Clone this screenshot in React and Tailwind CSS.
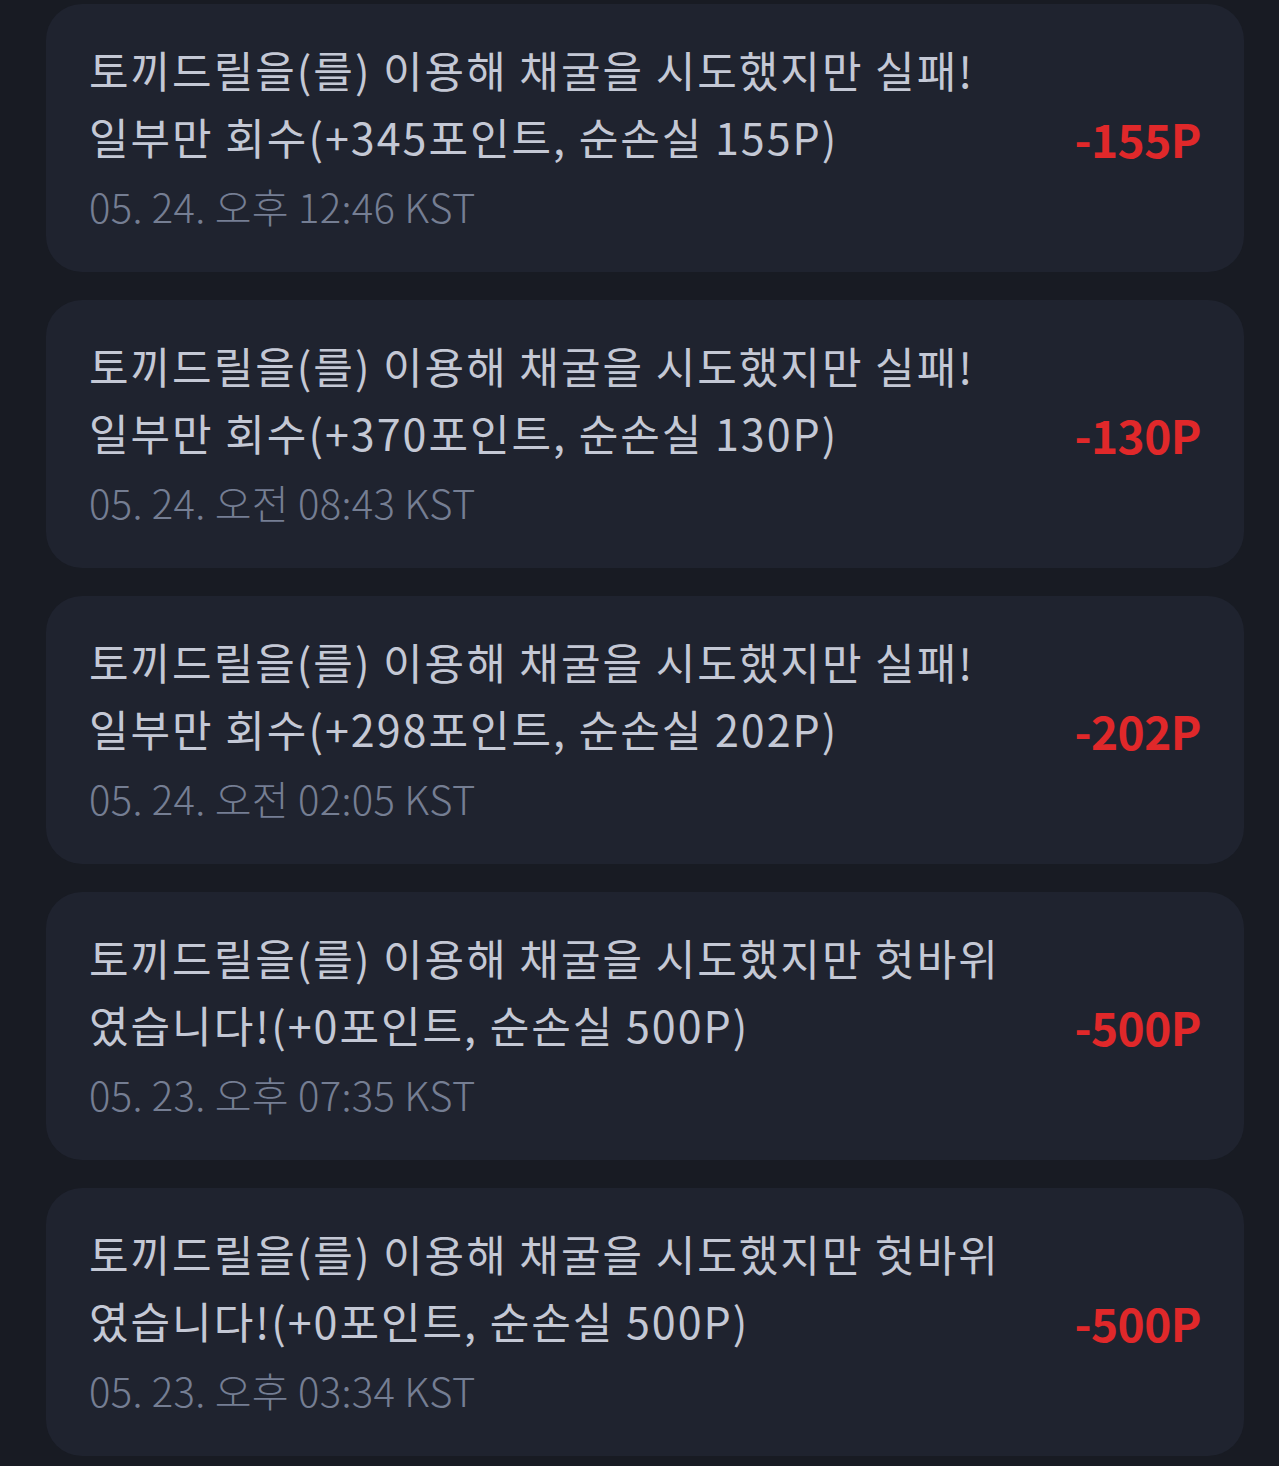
const items = [
  {
    lines: ['토끼드릴을(를) 이용해 채굴을 시도했지만 실패!', '일부만 회수(+345포인트, 순손실 155P)'],
    date: '05. 24. 오후 12:46 KST',
    amount: '-155P',
  },
  {
    lines: ['토끼드릴을(를) 이용해 채굴을 시도했지만 실패!', '일부만 회수(+370포인트, 순손실 130P)'],
    date: '05. 24. 오전 08:43 KST',
    amount: '-130P',
  },
  {
    lines: ['토끼드릴을(를) 이용해 채굴을 시도했지만 실패!', '일부만 회수(+298포인트, 순손실 202P)'],
    date: '05. 24. 오전 02:05 KST',
    amount: '-202P',
  },
  {
    lines: ['토끼드릴을(를) 이용해 채굴을 시도했지만 헛바위', '였습니다!(+0포인트, 순손실 500P)'],
    date: '05. 23. 오후 07:35 KST',
    amount: '-500P',
  },
  {
    lines: ['토끼드릴을(를) 이용해 채굴을 시도했지만 헛바위', '였습니다!(+0포인트, 순손실 500P)'],
    date: '05. 23. 오후 03:34 KST',
    amount: '-500P',
  },
];

function HistoryCard({ item }) {
  return (
    <div className="flex h-[268px] items-center justify-between rounded-[36px] bg-[#1f232f] pl-[43px] pr-[43px]">
      <div className="flex flex-col">
        {item.lines.map((line, i) => (
          <span
            key={i}
            className="whitespace-nowrap text-[43px] leading-[67px] tracking-[2px] text-[#c4c8d5]"
          >
            {line}
          </span>
        ))}
        <span className="whitespace-nowrap pt-[3px] text-[40px] font-light leading-[67px] tracking-[0.3px] text-[#757e93]">
          {item.date}
        </span>
      </div>
      <span className="text-[46px] font-bold leading-none tracking-[-0.5px] text-[#e0282a]">
        {item.amount}
      </span>
    </div>
  );
}

export default function App() {
  return (
    <div
      className="min-h-[1466px] bg-[#181b23] pl-[46px] pr-[35px] pt-[4px]"
      style={{ fontFamily: '"Noto Sans CJK KR", "Noto Sans", sans-serif' }}
    >
      <div className="flex flex-col gap-[28px]">
        {items.map((item, i) => (
          <HistoryCard key={i} item={item} />
        ))}
      </div>
    </div>
  );
}
